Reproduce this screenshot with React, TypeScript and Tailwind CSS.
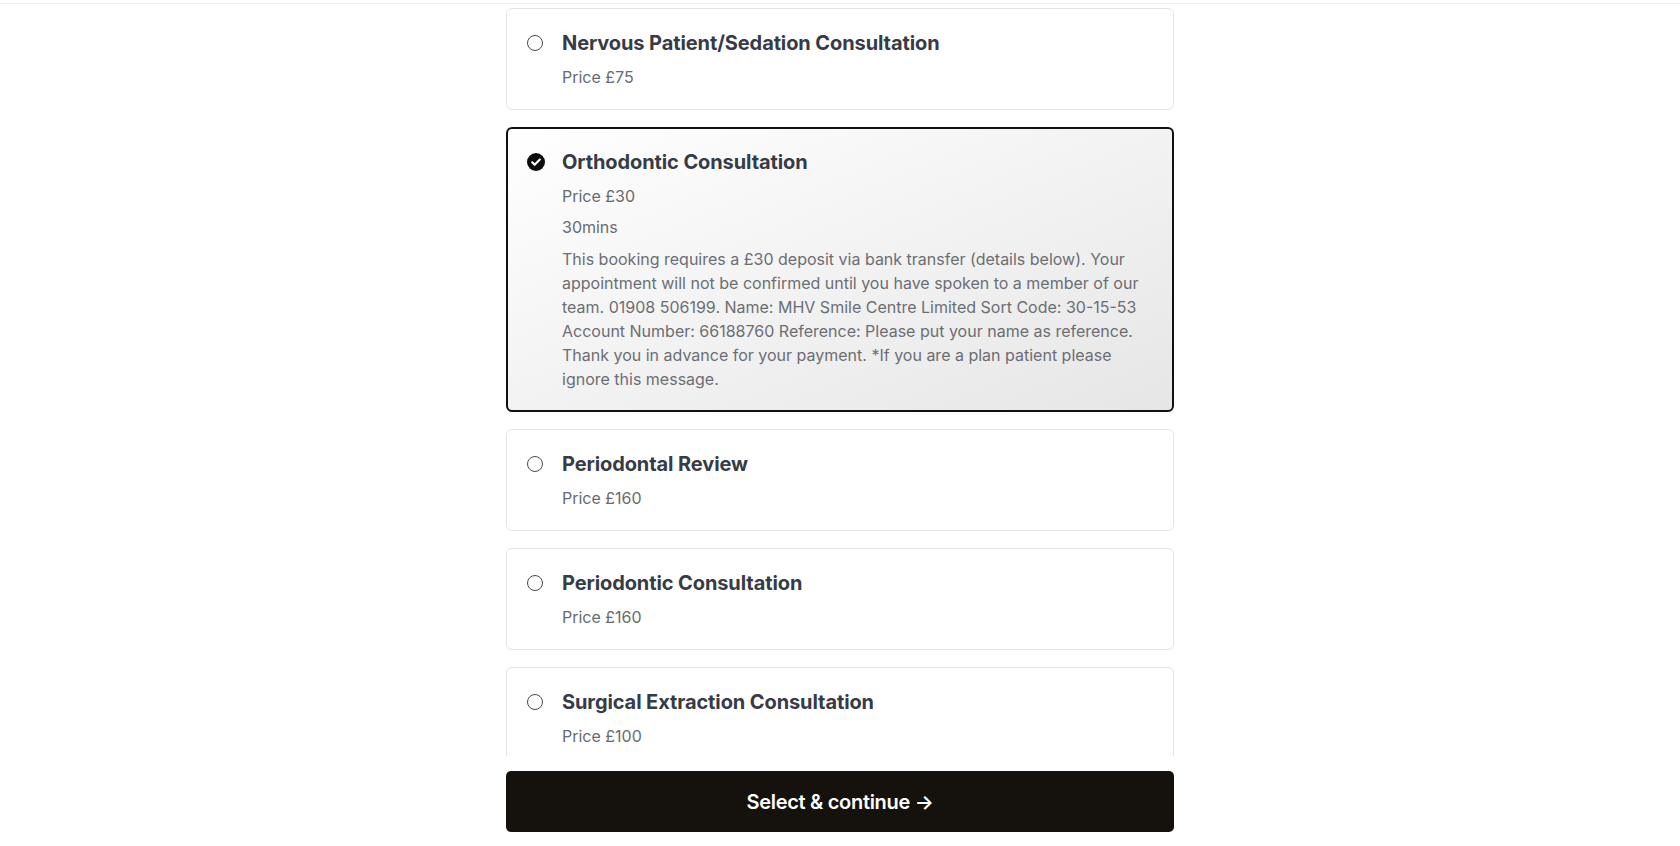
import React, { useState } from 'react';

interface Service {
  id: string;
  name: string;
  price: string;
  duration?: string;
  description?: string;
}

const services: Service[] = [
  { id: 'nervous', name: 'Nervous Patient/Sedation Consultation', price: 'Price £75' },
  {
    id: 'ortho',
    name: 'Orthodontic Consultation',
    price: 'Price £30',
    duration: '30mins',
    description:
      'This booking requires a £30 deposit via bank transfer (details below). Your appointment will not be confirmed until you have spoken to a member of our team. 01908 506199. Name: MHV Smile Centre Limited Sort Code: 30-15-53 Account Number: 66188760 Reference: Please put your name as reference. Thank you in advance for your payment. *If you are a plan patient please ignore this message.',
  },
  { id: 'perio-review', name: 'Periodontal Review', price: 'Price £160' },
  { id: 'perio-consult', name: 'Periodontic Consultation', price: 'Price £160' },
  { id: 'surgical', name: 'Surgical Extraction Consultation', price: 'Price £100' },
];

const CheckedIcon = () => (
  <svg viewBox="0 0 16 16" className="w-[18px] h-[18px] shrink-0">
    <circle cx="8" cy="8" r="8" fill="#0d0d0d" />
    <path d="M4.6 8.3l2.2 2.2 4.6-4.7" fill="none" stroke="#fff" strokeWidth="1.9" strokeLinecap="round" strokeLinejoin="round" />
  </svg>
);

const EmptyIcon = () => (
  <span className="w-4 h-4 shrink-0 rounded-full border border-[#4a4a4a] bg-white" />
);

export default function App() {
  const [selected, setSelected] = useState('ortho');

  return (
    <div className="min-h-screen bg-white" style={{ fontFamily: 'Inter, "Noto Sans", sans-serif' }}>
      <div className="h-[4px] border-b border-[#ececec]" />
      <div className="w-[668px] mx-auto pt-[4px]">
        <div className="h-[748px] overflow-hidden flex flex-col gap-[17px]">
          {services.map((s) => {
            const active = s.id === selected;
            return (
              <button
                key={s.id}
                onClick={() => setSelected(s.id)}
                className={
                  active
                    ? 'shrink-0 text-left flex gap-[17px] pl-[19px] pr-5 pt-[19px] pb-[19px] rounded-[6px] border-2 border-[#111] bg-gradient-to-br from-white to-[#e6e6e6]'
                    : 'shrink-0 text-left flex gap-[19px] pl-5 pr-5 pt-5 pb-5 rounded-[6px] border border-[#e4e4e4] bg-white'
                }
              >
                <div className="h-7 flex items-center">{active ? <CheckedIcon /> : <EmptyIcon />}</div>
                <div className="flex-1">
                  <div className="text-[20px] leading-7 font-bold tracking-[-0.1px] text-[#363b46]">{s.name}</div>
                  <div className="mt-2 text-[16px] leading-6 text-[#686b70]">{s.price}</div>
                  {s.duration && <div className="mt-[7px] text-[16px] leading-6 text-[#686b70]">{s.duration}</div>}
                  {s.description && (
                    <p className="mt-2 text-[16px] leading-6 text-[#6b6e73]">{s.description}</p>
                  )}
                </div>
              </button>
            );
          })}
        </div>
        <button className="mt-[15px] w-full h-[61px] rounded-[5px] bg-[#15120d] text-white text-[20px] font-semibold tracking-[-0.3px] flex items-center justify-center">
          Select &amp; continue →
        </button>
      </div>
    </div>
  );
}
